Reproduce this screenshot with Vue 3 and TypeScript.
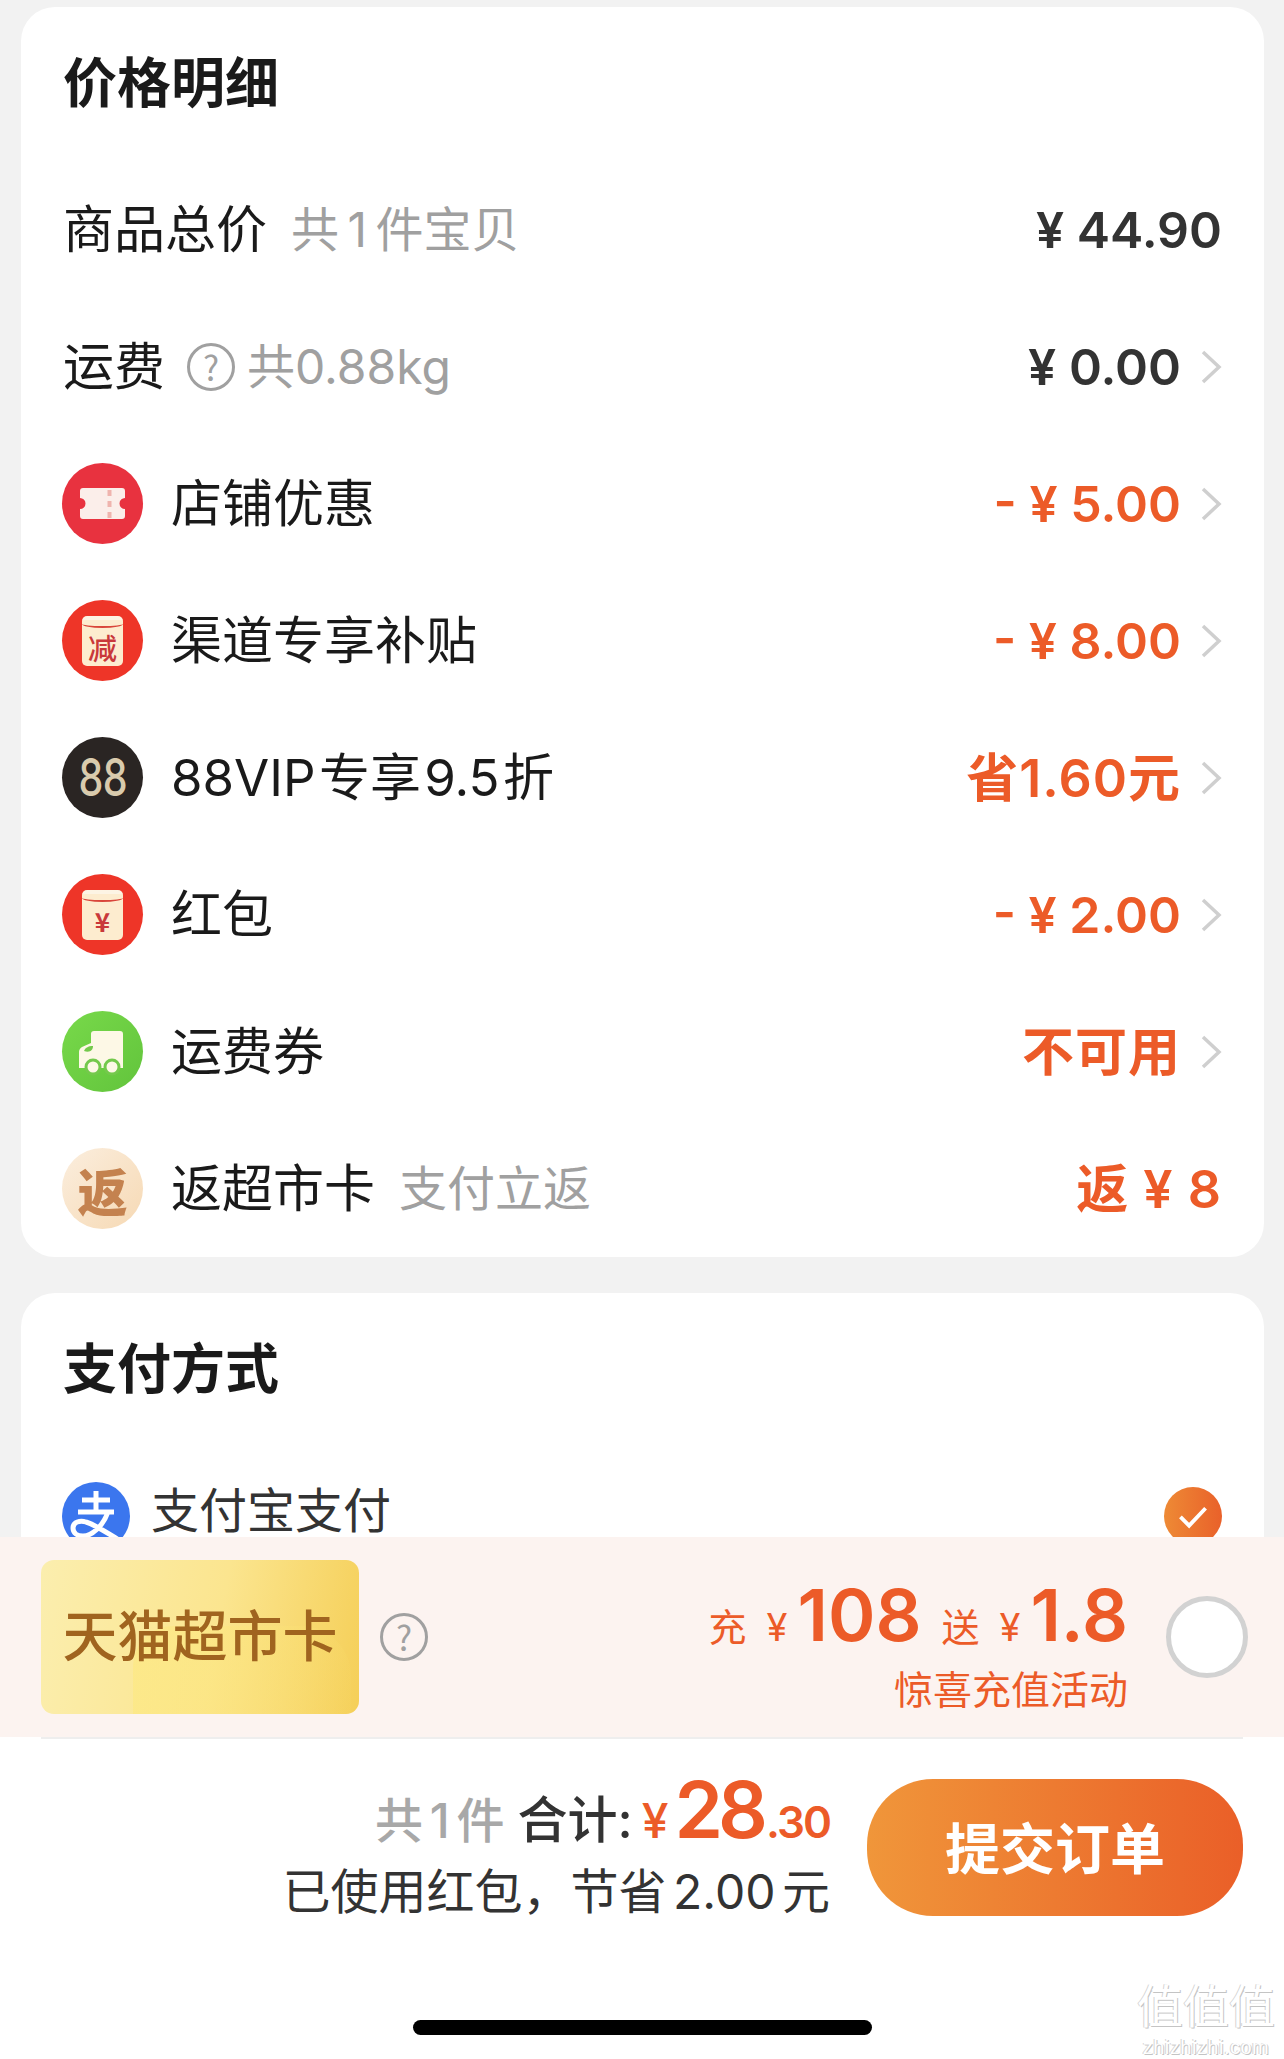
<script setup lang="ts">
interface Row {
  key: string
  label: string
  sub?: string
  value: string
  valueClass: string
  icon?: string
  chevron: boolean
  help?: boolean
}

const rows: Row[] = [
  { key: 'total', label: '商品总价', sub: '共 1 件宝贝', value: '¥ 44.90', valueClass: 'dark', chevron: false },
  { key: 'ship', label: '运费', sub: '共0.88kg', value: '¥ 0.00', valueClass: 'dark', chevron: true, help: true },
  { key: 'shop', label: '店铺优惠', value: '- ¥ 5.00', valueClass: 'hot', icon: 'ticket', chevron: true },
  { key: 'channel', label: '渠道专享补贴', value: '- ¥ 8.00', valueClass: 'hot', icon: 'jian', chevron: true },
  { key: 'vip', label: '88VIP 专享 9.5 折', value: '省1.60元', valueClass: 'hot wide', icon: 'vip', chevron: true },
  { key: 'red', label: '红包', value: '- ¥ 2.00', valueClass: 'hot', icon: 'yen', chevron: true },
  { key: 'freight', label: '运费券', value: '不可用', valueClass: 'hot wide', icon: 'truck', chevron: true },
  { key: 'back', label: '返超市卡', sub: '支付立返', value: '返 ¥ 8', valueClass: 'hot wide', icon: 'fan', chevron: false }
]
</script>

<template>
  <div class="page">
    <main class="scroll">
      <section class="card">
        <h2 class="title">价格明细</h2>
        <div v-for="row in rows" :key="row.key" class="row">
          <div v-if="row.icon" class="badge" :class="'badge-' + row.icon">
            <svg v-if="row.icon === 'ticket'" viewBox="0 0 81 81" width="81" height="81">
              <path d="M21 25h39a3 3 0 0 1 3 3v7a5.500 5.500 0 0 0 0 11v7a3 3 0 0 1-3 3H21a3 3 0 0 1-3-3v-7a5.500 5.500 0 0 0 0-11v-7a3 3 0 0 1 3-3z" fill="#fbeeea" />
              <path d="M47.500 27v28" stroke="#efb4ae" stroke-width="4" stroke-dasharray="6 5" fill="none" />
            </svg>
            <template v-else-if="row.icon === 'jian'">
              <span class="packet"><span class="packet-text">减</span></span>
            </template>
            <span v-else-if="row.icon === 'vip'" class="vip-text">88</span>
            <template v-else-if="row.icon === 'yen'">
              <span class="packet"><span class="packet-text yen">¥</span></span>
            </template>
            <svg v-else-if="row.icon === 'truck'" viewBox="0 0 81 81" width="81" height="81">
              <path d="M32 20h26a3 3 0 0 1 3 3v34H17V41c0-2 1-4 3-5l9-4v-9a3 3 0 0 1 3-3z" fill="#fdf8e6" />
              <path d="M22 40c1-3 4-5 9-5 0 4-3 7-9 5z" fill="#74c94c" />
              <circle cx="31" cy="56" r="7" fill="#fdf8e6" stroke="#74c94c" stroke-width="3" />
              <circle cx="50" cy="56" r="7" fill="#fdf8e6" stroke="#74c94c" stroke-width="3" />
            </svg>
            <span v-else class="fan-text">返</span>
          </div>
          <span class="label">{{ row.label }}</span>
          <span v-if="row.help" class="help help-row">?</span>
          <span v-if="row.sub" class="sub" :class="{ 'sub-tight': row.help }">{{ row.sub }}</span>
          <span class="value" :class="row.valueClass">{{ row.value }}</span>
          <svg v-if="row.chevron" class="chev" viewBox="0 0 21 34" width="21" height="34">
            <path d="M2 2l16 15L2 32" fill="none" stroke="#cfcfcf" stroke-width="3.500" />
          </svg>
        </div>
      </section>

      <section class="card second">
        <h2 class="title">支付方式</h2>
        <div class="row pay">
          <div class="ali">
            <svg viewBox="0 0 68 68" width="68" height="68">
              <circle cx="34" cy="34" r="34" fill="#3b76ee" />
              <path d="M20 18h28M16 30h36M34 9v21M46 30c-5 14-16 24-25 24-6 0-10-3-10-8 0-6 7-8 13-6 10 3 23 12 36 20" fill="none" stroke="#fff" stroke-width="5" />
            </svg>
          </div>
          <span class="ali-label">支付宝支付</span>
          <span class="check">
            <svg viewBox="0 0 60 60" width="58" height="58">
              <path d="M17 31l9 9 17-18" fill="none" stroke="#fff" stroke-width="4" />
            </svg>
          </span>
        </div>
      </section>
    </main>

    <section class="band">
      <div class="gift"><span class="gift-text">天猫超市卡</span></div>
      <span class="help help-band">?</span>
      <div class="offer">
        <div class="offer-line">
          <span class="o-small">充</span><span class="o-yen">¥</span><span class="o-big">108</span><span class="o-small send">送</span><span class="o-yen">¥</span><span class="o-big">1.8</span>
        </div>
        <div class="offer-note">惊喜充值活动</div>
      </div>
      <span class="radio"></span>
    </section>

    <footer class="footer">
      <div class="foot-row">
        <div class="sum">
          <div class="sum-line">
            <span class="count">共 1 件</span>
            <span class="total">合计:</span>
            <span class="s-yen">¥</span><span class="s-big">28</span><span class="s-cents">.30</span>
          </div>
          <div class="saved">已使用红包，节省 2.00 元</div>
        </div>
        <button class="submit" type="button">提交订单</button>
      </div>
      <div class="home"></div>
      <div class="mark">
        <div class="mark-cn">值值值</div>
        <div class="mark-en">zhizhizhi.com</div>
      </div>
    </footer>
  </div>
</template>

<style scoped>
.page {
  width: 1284px;
  height: 2059px;
  display: flex;
  flex-direction: column;
  overflow: hidden;
  background: #f2f2f2;
  font-family: Inter, "Noto Sans CJK SC", sans-serif;
  color: #1a1a1a;
}
.scroll {
  height: 1537px;
  flex: none;
  overflow: hidden;
  padding: 7px 20px 0 21px;
  box-sizing: border-box;
}
.card {
  background: #fff;
  border-radius: 34px;
  padding: 0 42px;
}
.second {
  margin-top: 36px;
  border-radius: 34px 34px 0 0;
  height: 400px;
}
.title {
  margin: 0;
  height: 154px;
  box-sizing: border-box;
  padding-bottom: 10px;
  display: flex;
  align-items: center;
  font-size: 54px;
  font-weight: 700;
  color: #1a1a1a;
  font-family: "Noto Sans CJK SC", sans-serif;
}
.row {
  height: 137px;
  display: flex;
  align-items: center;
}
.badge {
  width: 81px;
  height: 81px;
  border-radius: 50%;
  margin: 0 28px 0 -1px;
  flex: none;
  display: flex;
  align-items: center;
  justify-content: center;
  overflow: hidden;
}
.badge-ticket { background: #e8323f; }
.badge-jian, .badge-yen { background: #ee3528; }
.badge-vip { background: #2a2523; }
.badge-truck { background: linear-gradient(135deg, #78d94a, #62c43c); }
.badge-fan { background: linear-gradient(135deg, #fbeede, #f6d9b4); }
.packet {
  width: 41px;
  height: 50px;
  background: #fdeccf;
  border-radius: 5px;
  display: flex;
  align-items: flex-end;
  justify-content: center;
  position: relative;
  border-top: 4px solid #fdf4e4;
  box-sizing: border-box;
}
.packet::before {
  content: "";
  position: absolute;
  left: 0;
  right: 0;
  top: 0;
  height: 6px;
  border-bottom: 2px solid #d9453a;
  border-radius: 0 0 50% 50%;
}
.packet-text {
  font-family: "Noto Sans CJK SC", sans-serif;
  font-size: 29px;
  font-weight: 500;
  line-height: 38px;
  color: #c9383a;
}
.packet-text.yen {
  font-weight: 700;
  font-size: 26px;
}
.vip-text {
  font-size: 52px;
  font-weight: 500;
  letter-spacing: -1px;
  color: #d9cbad;
  line-height: 1;
  transform: scaleX(0.76);
}
.fan-text {
  font-family: "Noto Sans CJK SC", sans-serif;
  font-size: 50px;
  font-weight: 900;
  color: #c4824f;
  line-height: 1;
}
.label {
  font-family: Inter, "Noto Sans CJK SC", sans-serif;
  font-size: 51px;
  font-weight: 400;
  color: #1a1a1a;
  white-space: nowrap;
  word-spacing: -11px;
  margin-bottom: 8px;
}
.sub {
  margin-left: 24px;
  margin-bottom: 8px;
  font-size: 48px;
  color: #a0a0a0;
  white-space: nowrap;
  word-spacing: -5px;
}
.sub-tight { margin-left: 12px; }
.help {
  width: 48px;
  height: 48px;
  box-sizing: border-box;
  border: 3px solid #a0a0a0;
  border-radius: 50%;
  color: #a0a0a0;
  display: flex;
  align-items: center;
  justify-content: center;
  font-family: "Noto Sans CJK SC", sans-serif;
  font-size: 34px;
  line-height: 1;
  flex: none;
}
.help-row { margin-left: 22px; }
.help-band { margin-left: 21px; }
.value {
  margin-left: auto;
  font-size: 50px;
  font-weight: 600;
  white-space: nowrap;
}
.value.dark { color: #333; }
.value.hot { color: #ec5b28; }
.value.wide {
  font-size: 52px;
  letter-spacing: 1px;
  margin-bottom: 7px;
}
.chev {
  margin-left: 20px;
  flex: none;
}
.ali {
  width: 68px;
  height: 68px;
  margin-left: -1px;
  flex: none;
}
.ali-label {
  margin-left: 21px;
  margin-bottom: 18px;
  font-size: 48px;
  line-height: 48px;
  color: #333;
  font-family: "Noto Sans CJK SC", sans-serif;
}
.check {
  margin-left: auto;
  width: 58px;
  height: 58px;
  border-radius: 50%;
  background: linear-gradient(90deg, #ee8a35, #e9612a);
}
.band {
  height: 200px;
  flex: none;
  background: #fcf3f0;
  display: flex;
  align-items: center;
  padding: 0 36px 0 41px;
  box-sizing: border-box;
}
.gift {
  width: 318px;
  height: 154px;
  box-sizing: border-box;
  padding-bottom: 10px;
  border-radius: 13px;
  background: linear-gradient(100deg, #fbeeae 0%, #fbe58f 55%, #f5cf58 100%);
  display: flex;
  align-items: center;
  justify-content: center;
  position: relative;
  overflow: hidden;
}
.gift::after {
  content: "";
  position: absolute;
  left: 92px;
  right: 8px;
  top: 66px;
  bottom: 0;
  border-radius: 40px 50px 0 0;
  background: linear-gradient(100deg, rgba(253, 233, 130, 0.7), rgba(247, 214, 100, 0.2));
}
.gift-text {
  position: relative;
  z-index: 1;
  font-family: "Noto Sans CJK SC", sans-serif;
  font-size: 55px;
  font-weight: 500;
  color: #a0641f;
  white-space: nowrap;
}
.offer {
  margin-left: auto;
  padding-top: 18px;
  text-align: right;
  color: #ec5b28;
}
.offer-line {
  display: flex;
  align-items: baseline;
  justify-content: flex-end;
  height: 76px;
  line-height: 76px;
}
.o-small {
  font-family: "Noto Sans CJK SC", sans-serif;
  font-size: 38px;
}
.send { margin-left: 20px; }
.o-yen {
  font-size: 38px;
  margin-left: 20px;
  margin-right: 10px;
}
.o-big {
  font-size: 72px;
  font-weight: 600;
}
.offer-note {
  font-family: "Noto Sans CJK SC", sans-serif;
  font-size: 39px;
  line-height: 56px;
  margin-top: 6px;
}
.radio {
  width: 82px;
  height: 82px;
  border-radius: 50%;
  background: #fff;
  border: 5px solid #d2d2d2;
  box-sizing: border-box;
  margin-left: 38px;
  flex: none;
}
.footer {
  flex: 1;
  background: #fff;
  position: relative;
  padding: 0 41px;
}
.foot-row {
  display: flex;
  justify-content: flex-end;
  padding-top: 40px;
  gap: 37px;
  border-top: 2px solid #eee;
}
.sum {
  text-align: right;
  white-space: nowrap;
}
.sum-line {
  display: flex;
  align-items: baseline;
  justify-content: flex-end;
  height: 62px;
  line-height: 62px;
}
.count {
  font-size: 48px;
  font-weight: 500;
  color: #a8a8a8;
  margin-right: 13px;
  word-spacing: -6px;
}
.total {
  font-size: 50px;
  font-weight: 500;
  color: #333;
  margin-right: 9px;
}
.s-yen {
  font-size: 48px;
  font-weight: 500;
  color: #ec5b28;
  margin-right: 6px;
}
.s-big {
  font-size: 78px;
  font-weight: 600;
  color: #ec5b28;
  letter-spacing: -5px;
}
.s-cents {
  font-size: 44px;
  font-weight: 600;
  color: #ec5b28;
  letter-spacing: -2px;
  margin-left: 3px;
}
.saved {
  font-size: 48px;
  line-height: 48px;
  margin-top: 27px;
  color: #333;
  word-spacing: -7px;
}
.submit {
  width: 376px;
  height: 137px;
  border: 0;
  border-radius: 66px;
  background: linear-gradient(90deg, #f0963a, #ea5f28);
  color: #fff;
  font-family: "Noto Sans CJK SC", sans-serif;
  font-size: 55px;
  font-weight: 700;
  padding: 0 0 6px;
  flex: none;
}
.home {
  width: 459px;
  height: 15px;
  border-radius: 8px;
  background: #000;
  margin: 104px 0 0 372px;
}
.mark {
  position: absolute;
  right: 4px;
  top: 243px;
  width: 148px;
  text-align: center;
  color: #fff;
}
.mark-cn {
  font-family: "Noto Sans CJK SC", sans-serif;
  font-size: 46px;
  line-height: 46px;
  text-shadow: 1px 1px 0 #c4c4c4, -1px 0 0 #d4d4d4;
  white-space: nowrap;
}
.mark-en {
  font-family: "Liberation Sans", sans-serif;
  font-size: 20px;
  line-height: 23px;
  margin-top: 10px;
  letter-spacing: 0.5px;
  text-shadow: 1px 1px 0 #c4c4c4, -1px 0 0 #d4d4d4;
  white-space: nowrap;
}
</style>
